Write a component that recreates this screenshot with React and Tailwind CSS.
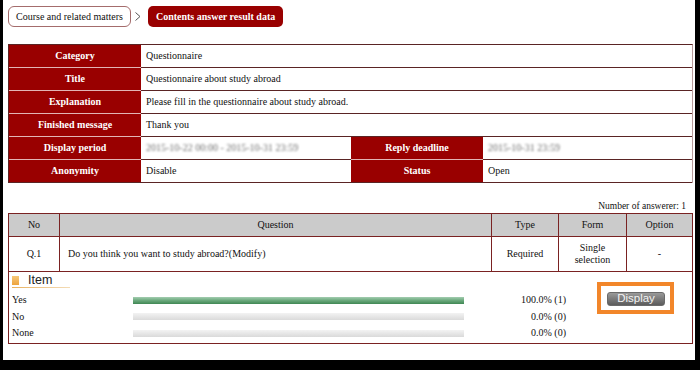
import React from "react";

const serif = { fontFamily: '"Liberation Serif", "Times New Roman", serif' };

function InfoRow({ label, children, last }) {
  return (
    <div className="flex h-[23px]">
      <div
        className={`w-[132px] flex items-center justify-center bg-[#990000] text-white font-bold border-b ${
          last ? "border-[#5a2424]" : "border-[#e2b4b4]"
        }`}
      >
        {label}
      </div>
      <div className="flex-1 flex items-center pl-[5px] border-b border-[#5a2424] text-[#111]">
        {children}
      </div>
    </div>
  );
}

function SplitRow({ label1, value1, label2, value2, last }) {
  return (
    <div className="flex h-[23px]">
      <div
        className={`w-[132px] flex items-center justify-center bg-[#990000] text-white font-bold border-b ${
          last ? "border-[#5a2424]" : "border-[#e2b4b4]"
        }`}
      >
        {label1}
      </div>
      <div className="w-[210px] flex items-center pl-[5px] border-b border-[#5a2424] text-[#111]">
        {value1}
      </div>
      <div
        className={`w-[132px] flex items-center justify-center bg-[#990000] text-white font-bold border-b ${
          last ? "border-[#5a2424]" : "border-[#e2b4b4]"
        }`}
      >
        {label2}
      </div>
      <div className="flex-1 flex items-center pl-[5px] border-b border-[#5a2424] text-[#111]">
        {value2}
      </div>
    </div>
  );
}

function Bar({ label, text, full }) {
  return (
    <div className="flex items-center h-[16.5px]">
      <div className="w-[121px] text-[#111]">{label}</div>
      <div className="w-[331px] h-[7px]">
        {full ? (
          <div className="h-full w-full bg-gradient-to-b from-[#a3cdb0] via-[#6aa87c] to-[#3f8753]" />
        ) : (
          <div className="h-full w-full bg-gradient-to-b from-[#f3f3f3] to-[#dadada]" />
        )}
      </div>
      <div className="w-[102px] text-right text-[#111]">{text}</div>
    </div>
  );
}

export default function App() {
  return (
    <div className="w-[700px] h-[370px] bg-black overflow-hidden">
      <div
        className="ml-[3px] w-[692px] h-[360px] bg-white pl-[5px] pt-[6px] text-[10px] leading-none"
        style={serif}
      >
        {/* Breadcrumb */}
        <div className="flex items-center">
          <div className="h-[21px] px-[7px] flex items-center rounded-[6px] border border-[#a46c6c] text-[#111] bg-white">
            Course and related matters
          </div>
          <svg width="8" height="11" viewBox="0 0 8 11" className="ml-[3px] mr-[6px]">
            <polyline points="1.5,1.5 6,5.5 1.5,9.5" fill="none" stroke="#555" strokeWidth="1" />
          </svg>
          <div className="h-[21px] px-[8px] flex items-center rounded-[5px] bg-[#990000] text-white font-bold">
            Contents answer result data
          </div>
        </div>

        {/* Info table */}
        <div className="mt-[17px] w-[685px] border-t border-l border-[#5a2424] border-r border-r-[#b79c9c]">
          <InfoRow label="Category">Questionnaire</InfoRow>
          <InfoRow label="Title">Questionnaire about study abroad</InfoRow>
          <InfoRow label="Explanation">Please fill in the questionnaire about study abroad.</InfoRow>
          <InfoRow label="Finished message">Thank you</InfoRow>
          <SplitRow
            label1="Display period"
            value1={<span className="blur-[1.2px] text-[#6f6f6f]">2015-10-22 00:00 - 2015-10-31 23:59</span>}
            label2="Reply deadline"
            value2={<span className="blur-[1.2px] text-[#6f6f6f]">2015-10-31 23:59</span>}
          />
          <SplitRow label1="Anonymity" value1="Disable" label2="Status" value2="Open" last />
        </div>

        {/* Number of answerer */}
        <div className="mt-[17px] h-[13px] w-[685px] pr-[7px] flex items-center justify-end text-[#111] text-[9.5px]">
          Number of answerer: 1
        </div>

        {/* Question table */}
        <div className="w-[685px] border-t border-l border-r border-[#7a2222] text-[#111]">
          <div className="flex h-[23px] bg-[#cbcbcb] border-b border-[#7a2222]">
            <div className="w-[51px] border-r border-[#7a2222] flex items-center justify-center">No</div>
            <div className="w-[432px] border-r border-[#7a2222] flex items-center justify-center">Question</div>
            <div className="w-[67px] border-r border-[#7a2222] flex items-center justify-center">Type</div>
            <div className="w-[68px] border-r border-[#7a2222] flex items-center justify-center">Form</div>
            <div className="flex-1 flex items-center justify-center">Option</div>
          </div>
          <div className="flex h-[35px] bg-white border-b border-[#7a2222]">
            <div className="w-[51px] border-r border-[#7a2222] flex items-center justify-center">Q.1</div>
            <div className="w-[432px] border-r border-[#7a2222] flex items-center pl-[8px]">
              Do you think you want to study abroad?(Modify)
            </div>
            <div className="w-[67px] border-r border-[#7a2222] flex items-center justify-center">Required</div>
            <div className="w-[68px] border-r border-[#7a2222] flex items-center justify-center text-center leading-[12px]">
              Single
              <br />
              selection
            </div>
            <div className="flex-1 flex items-center justify-center">-</div>
          </div>
          <div className="flex h-[72px] border-b border-[#7a2222]">
            <div className="w-[557px] pl-[3px]">
              <div className="mt-[3px] h-[10px] flex items-center">
                <div className="w-[7px] h-[9px] bg-gradient-to-b from-[#f7c877] to-[#eda43c]" />
                <span
                  className="ml-[9px] text-[12.5px] text-[#222]"
                  style={{ fontFamily: '"Liberation Sans", Arial, sans-serif' }}
                >
                  Item
                </span>
              </div>
              <div className="mt-[2px] h-[1px] w-[58px] bg-gradient-to-r from-[#e9b25e] to-[#f3dcb6]" />
              <div className="mt-[4px]">
                <Bar label="Yes" text="100.0% (1)" full />
                <Bar label="No" text="0.0% (0)" />
                <Bar label="None" text="0.0% (0)" />
              </div>
            </div>
            <div className="ml-[31px] mt-[10px] w-[77px] h-[32px] border-[4px] border-[#f2862a]">
              <div
                className="ml-[6px] mt-[6px] w-[58px] h-[14px] rounded-[3px] border border-[#6a6a6a] bg-gradient-to-b from-[#9a9a9a] to-[#5c5c5c] flex items-center justify-center text-[11.5px] text-[#f4f4f4]"
                style={{ fontFamily: '"Liberation Sans", Arial, sans-serif' }}
              >
                Display
              </div>
            </div>
          </div>
        </div>
      </div>
    </div>
  );
}
